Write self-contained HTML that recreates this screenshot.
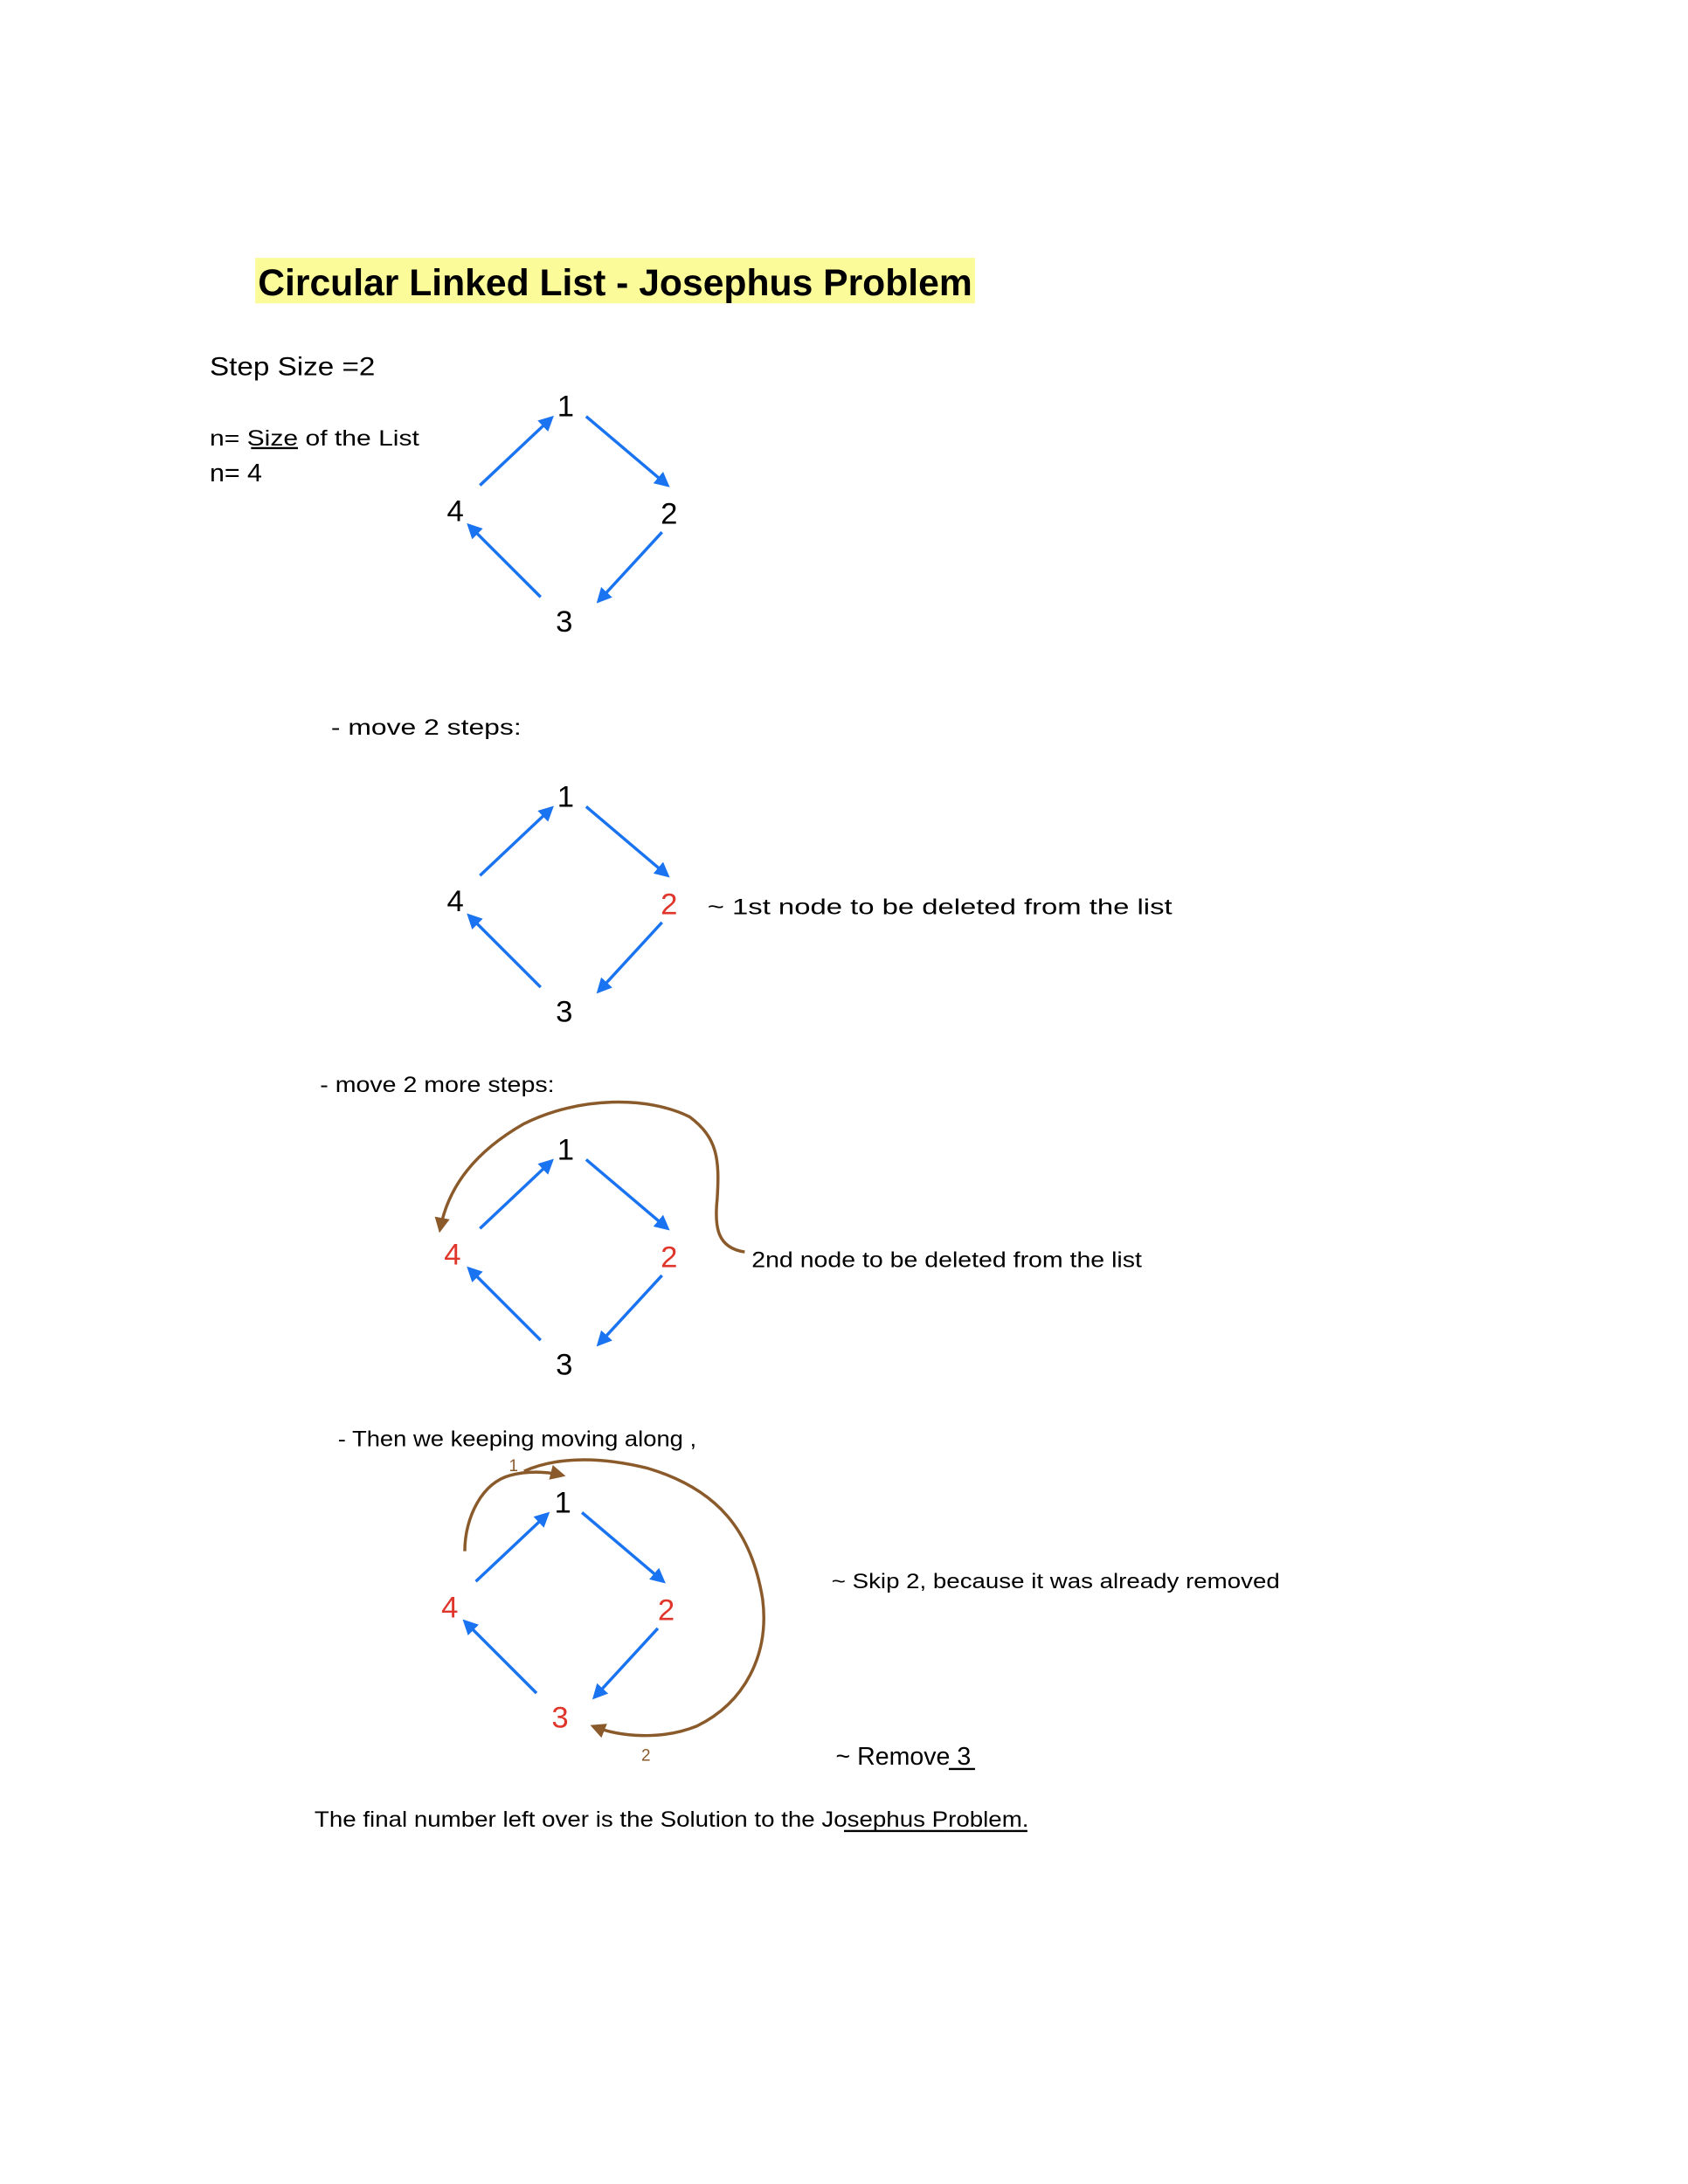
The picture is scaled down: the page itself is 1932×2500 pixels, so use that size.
<!DOCTYPE html>
<html><head><meta charset="utf-8"><style>
html,body{margin:0;padding:0;background:#fff;}
svg{display:block;}
.h{font-family:"Liberation Sans Narrow","Liberation Sans",sans-serif;fill:#000;}
.n{font-family:"Liberation Sans",sans-serif;font-size:22px;}
.b{stroke:#1a73f0;stroke-width:2.2;fill:none;}
.br{stroke:#8a5a2b;stroke-width:2.2;fill:none;}
</style></head><body>
<svg width="1932" height="2500" viewBox="0 0 1224 1584" xmlns="http://www.w3.org/2000/svg">
<defs>
<marker id="a" viewBox="0 0 10 10" refX="8" refY="5" markerWidth="5" markerHeight="5" orient="auto"><path d="M0,0 L10,5 L0,10 z" fill="#1a73f0"/></marker>
<marker id="m" viewBox="0 0 10 10" refX="8" refY="5" markerWidth="5" markerHeight="5" orient="auto"><path d="M0,0 L10,5 L0,10 z" fill="#8a5a2b"/></marker>
<g id="d">
<line class="b" x1="348" y1="352" x2="400" y2="303" marker-end="url(#a)"/>
<line class="b" x1="425" y1="302" x2="484" y2="352" marker-end="url(#a)"/>
<line class="b" x1="480" y1="386" x2="434" y2="436" marker-end="url(#a)"/>
<line class="b" x1="392" y1="433" x2="340" y2="381" marker-end="url(#a)"/>
</g>
</defs>
<rect x="185" y="187" width="522" height="33" fill="#fbfb9a"/>
<text x="187" y="214" font-family="Liberation Sans,sans-serif" font-weight="bold" font-size="27" textLength="518" lengthAdjust="spacingAndGlyphs">Circular Linked List - Josephus Problem</text>

<text class="h" x="152" y="272" font-size="19" textLength="120" lengthAdjust="spacingAndGlyphs">Step Size =2</text>
<text class="h" x="152" y="323" font-size="16" textLength="152" lengthAdjust="spacingAndGlyphs">n= Size of the List</text>
<line x1="182" y1="325" x2="216" y2="325" stroke="#000" stroke-width="1.5"/>
<text class="h" x="152" y="349" font-size="18" textLength="38" lengthAdjust="spacingAndGlyphs">n= 4</text>

<use href="#d"/>
<text class="n" x="404" y="302">1</text><text class="n" x="479" y="380">2</text><text class="n" x="403" y="458">3</text><text class="n" x="324" y="378">4</text>

<text class="h" x="240" y="533" font-size="16" textLength="138" lengthAdjust="spacingAndGlyphs">- move 2 steps:</text>

<use href="#d" y="283"/>
<text class="n" x="404" y="585">1</text><text class="n" x="479" y="663" fill="#e0352b">2</text><text class="n" x="403" y="741">3</text><text class="n" x="324" y="661">4</text>
<text class="h" x="513" y="663" font-size="16" textLength="337" lengthAdjust="spacingAndGlyphs">~ 1st node to be deleted from the list</text>

<text class="h" x="232" y="792" font-size="16" textLength="170" lengthAdjust="spacingAndGlyphs">- move 2 more steps:</text>

<use href="#d" y="539"/>
<text class="n" x="404" y="841">1</text><text class="n" x="479" y="919" fill="#e0352b">2</text><text class="n" x="403" y="997">3</text><text class="n" x="322" y="917" fill="#e0352b">4</text>
<path class="br" d="M540,908 C520,905 518,890 520,870 C522,840 520,825 500,810 C470,795 420,795 380,815 C345,835 325,860 319,892" marker-end="url(#m)"/>
<text class="h" x="545" y="919" font-size="16" textLength="283" lengthAdjust="spacingAndGlyphs">2nd node to be deleted from the list</text>

<text class="h" x="245" y="1049" font-size="16" textLength="260" lengthAdjust="spacingAndGlyphs">- Then we keeping moving along ,</text>

<use href="#d" x="-3" y="795"/>
<text class="n" x="402" y="1097">1</text><text class="n" x="477" y="1175" fill="#e0352b">2</text><text class="n" x="400" y="1253" fill="#e0352b">3</text><text class="n" x="320" y="1173" fill="#e0352b">4</text>
<path class="br" d="M337,1125 C337,1100 350,1075 370,1070 C385,1066 400,1068 408,1070" marker-end="url(#m)"/>
<path class="br" d="M380,1067 C400,1058 430,1055 470,1065 C520,1080 545,1110 553,1160 C558,1200 540,1235 505,1252 C480,1262 450,1260 430,1252" marker-end="url(#m)"/>
<text x="369" y="1067" font-family="Liberation Sans Narrow,Liberation Sans,sans-serif" font-size="12" fill="#8a5a2b">1</text>
<text x="465" y="1277" font-family="Liberation Sans Narrow,Liberation Sans,sans-serif" font-size="12" fill="#8a5a2b">2</text>

<text class="h" x="603" y="1152" font-size="15" textLength="325" lengthAdjust="spacingAndGlyphs">~ Skip 2, because it was already removed</text>
<text class="h" x="606" y="1280" font-size="18" textLength="98" lengthAdjust="spacingAndGlyphs">~ Remove 3</text>
<line x1="688" y1="1283" x2="707" y2="1283" stroke="#000" stroke-width="1.5"/>

<text class="h" x="228" y="1325" font-size="16" textLength="518" lengthAdjust="spacingAndGlyphs">The final number left over is the Solution to the Josephus Problem.</text>
<line x1="612" y1="1328" x2="745" y2="1328" stroke="#000" stroke-width="1.5"/>
</svg>
</body></html>
